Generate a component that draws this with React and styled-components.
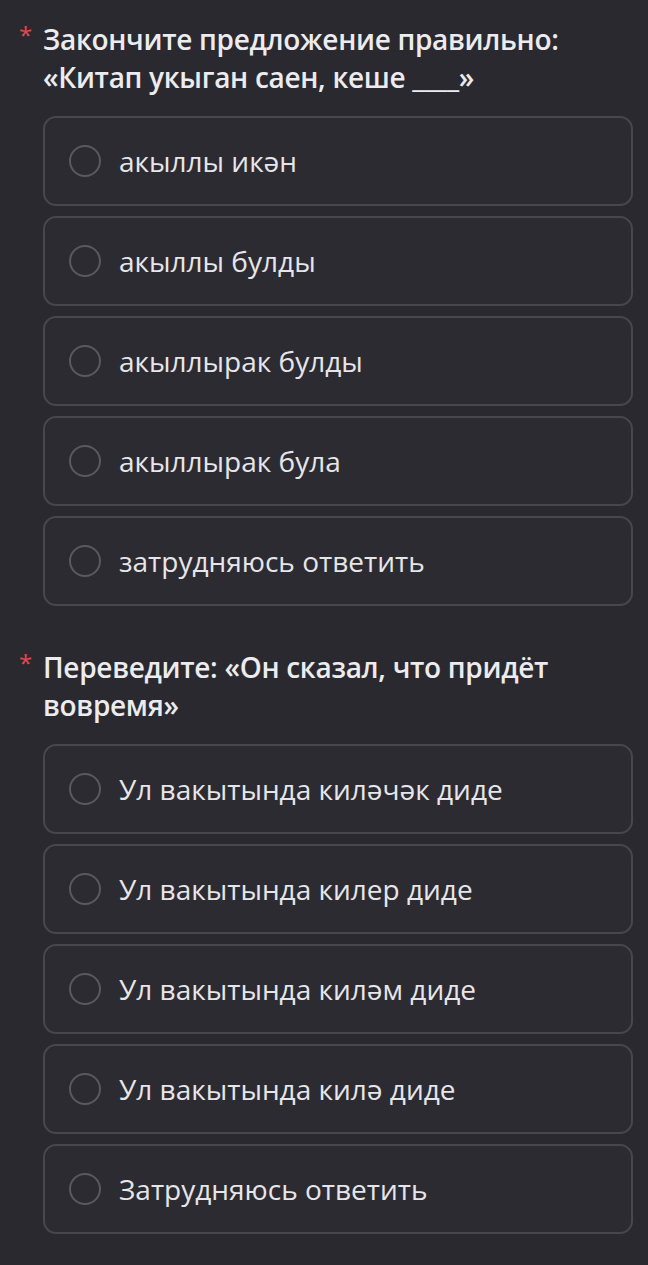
import React from 'react';
import styled, { createGlobalStyle } from 'styled-components';

const GlobalStyle = createGlobalStyle`
  html, body {
    margin: 0;
    padding: 0;
    background: #2a2930;
  }
  body {
    font-family: "Open Sans", "Noto Sans", sans-serif;
    color: #e8e8ec;
  }
`;

const questions = [
  {
    title: 'Закончите предложение правильно: «Китап укыган саен, кеше ____»',
    options: [
      'акыллы икән',
      'акыллы булды',
      'акыллырак булды',
      'акыллырак була',
      'затрудняюсь ответить',
    ],
  },
  {
    title: 'Переведите: «Он сказал, что придёт вовремя»',
    options: [
      'Ул вакытында киләчәк диде',
      'Ул вакытында килер диде',
      'Ул вакытында киләм диде',
      'Ул вакытында килә диде',
      'Затрудняюсь ответить',
    ],
  },
];

function App() {
  return (
    <>
      <GlobalStyle />
      <Page>
        {questions.map((q) => (
          <Question key={q.title}>
            <Title>
              <Asterisk>*</Asterisk>
              {q.title}
            </Title>
            <Options>
              {q.options.map((opt) => (
                <Option key={opt}>
                  <Radio />
                  <Label>{opt}</Label>
                </Option>
              ))}
            </Options>
          </Question>
        ))}
      </Page>
    </>
  );
}

const Page = styled.div`
  display: flex;
  flex-direction: column;
  gap: 42px;
  padding: 20px 15px 30px 43px;
  min-height: 1265px;
  box-sizing: border-box;
`;

const Question = styled.section`
  display: flex;
  flex-direction: column;
  gap: 20px;
`;

const Title = styled.h2`
  position: relative;
  margin: 0;
  font-size: 28px;
  line-height: 38px;
  font-weight: 600;
  letter-spacing: -0.3px;
  color: #ececf0;
  padding-right: 40px;
`;

const Asterisk = styled.span`
  position: absolute;
  left: -24px;
  top: -4px;
  color: #e5484d;
  font-size: 24px;
  font-weight: 400;
`;

const Options = styled.div`
  display: flex;
  flex-direction: column;
  gap: 10px;
`;

const Option = styled.label`
  display: flex;
  align-items: center;
  gap: 18px;
  height: 90px;
  box-sizing: border-box;
  padding: 0 24px;
  border: 2px solid #48474e;
  border-radius: 13px;
  background: #2c2b32;
`;

const Radio = styled.span`
  flex: none;
  width: 32px;
  height: 32px;
  box-sizing: border-box;
  border: 2px solid #5a5960;
  border-radius: 50%;
`;

const Label = styled.span`
  font-size: 28px;
  color: #e6e6ea;
`;

export default App;
